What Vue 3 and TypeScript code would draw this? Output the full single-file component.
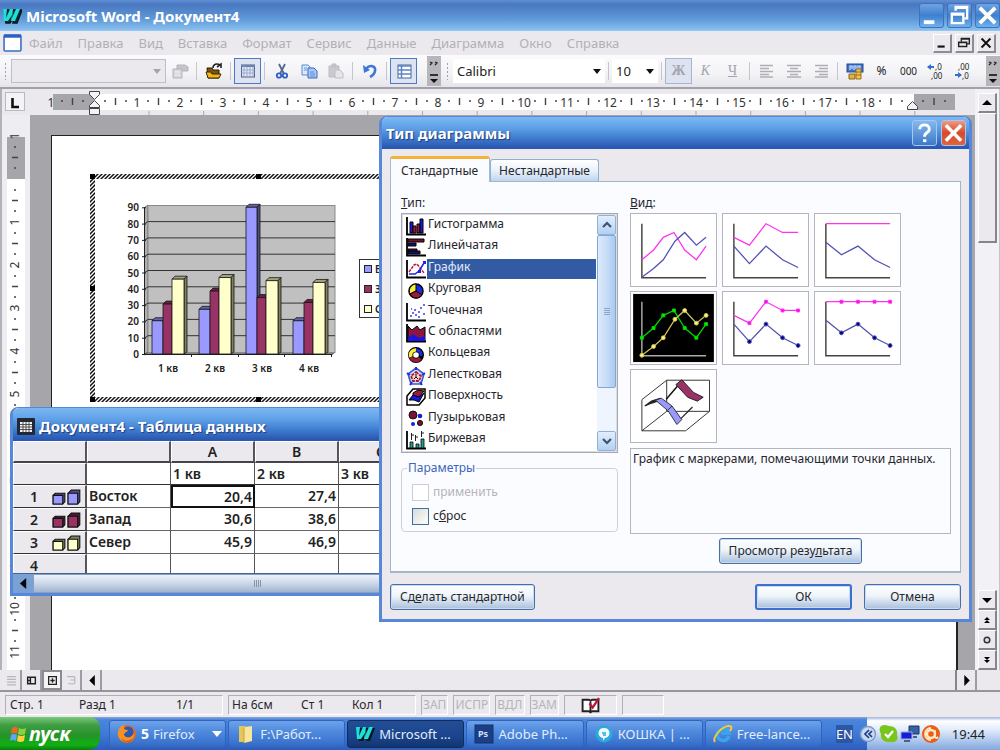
<script setup lang="ts">
import { ref } from 'vue'

const menus = ['Файл', 'Правка', 'Вид', 'Вставка', 'Формат', 'Сервис', 'Данные', 'Диаграмма', 'Окно', 'Справка']

const rulerNumbers = Array.from({ length: 18 }, (_, i) => i + 1)
const sideNumbers = Array.from({ length: 11 }, (_, i) => i + 1)
const tabStops = Array.from({ length: 15 }, (_, i) => 149 + i * 54.7)

const chartTypes = [
  { id: 'column', label: 'Гистограмма' },
  { id: 'bar', label: 'Линейчатая' },
  { id: 'line', label: 'График' },
  { id: 'pie', label: 'Круговая' },
  { id: 'scatter', label: 'Точечная' },
  { id: 'area', label: 'С областями' },
  { id: 'ring', label: 'Кольцевая' },
  { id: 'radar', label: 'Лепестковая' },
  { id: 'surface', label: 'Поверхность' },
  { id: 'bubble', label: 'Пузырьковая' },
  { id: 'stock', label: 'Биржевая' },
]
const selectedType = ref('line')
const selectedView = ref(3)
const applyFormat = ref(false)
const resetFormat = ref(false)

type Pt = [number, number]
interface View { a: Pt[]; b: Pt[]; markers: boolean }
const cross: Pt[] = [[11, 47], [23, 37], [33, 24], [44, 19], [55, 37], [67, 47], [77, 33]]
const rise: Pt[] = [[11, 65], [23, 56], [33, 47], [45, 28], [55, 19], [67, 32], [77, 24]]
const stackA: Pt[] = [[11, 24], [27, 32], [44, 10], [61, 19], [77, 19]]
const stackB: Pt[] = [[11, 33], [27, 51], [44, 33], [61, 47], [77, 55]]
const fullA: Pt[] = [[11, 10], [27, 10], [44, 10], [61, 10], [77, 10]]
const fullB: Pt[] = [[11, 29], [27, 42], [44, 33], [61, 47], [77, 55]]
const views: View[] = [
  { a: cross, b: rise, markers: false },
  { a: stackA, b: stackB, markers: false },
  { a: fullA, b: fullB, markers: false },
  { a: cross, b: rise, markers: true },
  { a: stackA, b: stackB, markers: true },
  { a: fullA, b: fullB, markers: true },
]
const toPoints = (p: Pt[]) => p.map((q) => q.join(',')).join(' ')
const markersOf = (v: View, p: Pt[]) => (v.a === cross ? p : p.slice(1))

const series = [
  { name: 'Восток', values: [20.4, 27.4, 90, 20.4], front: '#9999ff', side: '#4d4d80', top: '#6666aa' },
  { name: 'Запад', values: [30.6, 38.6, 34.6, 31.6], front: '#993366', side: '#4d1a33', top: '#66223f' },
  { name: 'Север', values: [45.9, 46.9, 45, 43.9], front: '#ffffcc', side: '#80805c', top: '#a5a57c' },
]
const quarters = ['1 кв', '2 кв', '3 кв', '4 кв']
const sheetColumns = 3
const levels = [0, 10, 20, 30, 40, 50, 60, 70, 80, 90]
const barOffsets = [152, 163, 172]
const barWidths = [11, 9, 12]
const base = 354
const scale = 1.63
interface Bar { x: number; w: number; y: number; front: string; side: string; top: string }
const bars: Bar[] = []
for (let q = 0; q < 4; q++) {
  series.forEach((s, i) => {
    bars.push({ x: barOffsets[i] + q * 47, w: barWidths[i], y: base - s.values[q] * scale, front: s.front, side: s.side, top: s.top })
  })
}
const fmt = (n: number) => n.toString().replace('.', ',')

const tasks = [
  { id: 'firefox', label: 'Firefox' },
  { id: 'folder', label: 'F:\\Работ...' },
  { id: 'word', label: 'Microsoft ...' },
  { id: 'ps', label: 'Adobe Ph...' },
  { id: 'chat', label: 'КОШКА | ...' },
  { id: 'ie', label: 'Free-lance...' },
]
</script>

<template>
  <div class="desktop">
    <header class="app-title">
      <svg class="w-logo" viewBox="0 0 20 18"><path d="M2 3h5l-1 8 4-8h4l-1 8 3-8h4l-5 13h-4l1-6-4 6H4z" fill="#0d2b33" stroke="#06181c" stroke-width="1.5" /><path d="M1 2h4l-1 9 4-9h3l-1 9 4-9h4l-5 12H9l1-6-4 6H2z" fill="#1fe0d6" /></svg>
      <h1>Microsoft Word - Документ4</h1>
      <div class="win-btns">
        <button aria-label="Свернуть"><svg viewBox="0 0 24 24"><path d="M4 19h11" stroke="#fff" stroke-width="4" /></svg></button>
        <button aria-label="Развернуть"><svg viewBox="0 0 24 24"><path d="M8 7V3h12v12h-3M8 4h12" fill="none" stroke="#fff" stroke-width="2.5" /><path d="M4 10h12v10H4zM4 11h12" fill="none" stroke="#fff" stroke-width="2.5" /></svg></button>
        <button aria-label="Закрыть"><svg viewBox="0 0 24 24"><path d="M4 4l16 16M20 4L4 20" stroke="#fff" stroke-width="4" /></svg></button>
      </div>
    </header>

    <nav class="menubar">
      <svg class="doc-icon" viewBox="0 0 18 17"><rect x="1" y="1" width="16" height="15" rx="1" fill="#fff" stroke="#3a6fc4" stroke-width="1.5" /><path d="M1 2h16" stroke="#2b62c0" stroke-width="3" /></svg>
      <button v-for="m in menus" :key="m" class="menu" disabled>{{ m }}</button>
      <div class="doc-btns">
        <button aria-label="Свернуть документ"><svg viewBox="0 0 18 18"><path d="M4 13h8" stroke="#111" stroke-width="2.4" /></svg></button>
        <button aria-label="Восстановить документ"><svg viewBox="0 0 18 18"><path d="M6 7V4h9v6h-3M6 4.5h9M3 8h9v5H3zM3 8.500h9" fill="none" stroke="#222" stroke-width="1.6" /></svg></button>
        <button aria-label="Закрыть документ"><svg viewBox="0 0 18 18"><path d="M4 4l10 10M14 4L4 14" stroke="#111" stroke-width="2.2" /></svg></button>
      </div>
    </nav>

    <div class="toolbar">
      <i class="grip" />
      <div class="combo combo-area off"><select disabled aria-label="Элементы диаграммы"><option></option></select><svg viewBox="0 0 8 5"><path d="M0 0h8l-4 5z" fill="#a5a5ad" /></svg></div>
      <button class="tool" disabled aria-label="Свойства"><svg viewBox="0 0 20 20"><path d="M7 4h8l3 2v4H7z" fill="#c4c4ca" stroke="#b4b4bc" /><path d="M3 8h9v9H3z" fill="#d6d6db" stroke="#b4b4bc" /><path d="M5 11h5M5 14h5" stroke="#f5f5f8" /></svg></button>
      <i class="sep" />
      <button class="tool" aria-label="Импорт файла"><svg viewBox="0 0 20 20"><path d="M3 7h5l1 2h6v8H4z" fill="#7a5410" stroke="#2a1c05" /><path d="M2 11h5l1 2h9l-2 4H4z" fill="#f3b51d" stroke="#3b2706" /><path d="M9 7c0-4 4-5 7-3M13 6l4-3v4" fill="none" stroke="#222" stroke-width="1.6" /></svg></button>
      <i class="sep" />
      <button class="tool on" aria-label="Режим таблицы"><svg viewBox="0 0 20 20"><rect x="3.500" y="4" width="13" height="12" fill="#dfe6f5" stroke="#4d5f88" /><path d="M3 5h14" stroke="#6682b5" stroke-width="2" /><path d="M6 4v12M9 6v10M12 6v10M15 6v10M3 9h14M3 12h14" stroke="#91a2c4" stroke-width=".8" /></svg></button>
      <i class="sep" />
      <button class="tool" aria-label="Вырезать"><svg viewBox="0 0 20 20"><path d="M7 3l5 10M13 3L8 13" stroke="#53678f" stroke-width="1.8" /><circle cx="7" cy="14.500" r="2.200" fill="none" stroke="#2c5fc7" stroke-width="1.800" /><circle cx="13" cy="14.500" r="2.200" fill="none" stroke="#2c5fc7" stroke-width="1.800" /></svg></button>
      <button class="tool" aria-label="Копировать"><svg viewBox="0 0 20 20"><path d="M3 4h6l2 2v8H3z" fill="#dbe8fc" stroke="#5c86cf" /><path d="M9 7h6l3 3v7H9z" fill="#a9c8f5" stroke="#3668bd" /><path d="M5 7h3M5 9h3M11 11h4M11 13h5M11 15h5" stroke="#4f7fca" stroke-width=".8" /></svg></button>
      <button class="tool" disabled aria-label="Вставить"><svg viewBox="0 0 20 20"><path d="M3 5h10v11H3zM6 3h4v3H6z" fill="#c9c9ce" stroke="#bcbcc3" /><path d="M9 9h5l3 3v5H9z" fill="#e6e6ea" stroke="#bcbcc3" /></svg></button>
      <i class="sep" />
      <button class="tool" aria-label="Отменить"><svg viewBox="0 0 20 20"><path d="M6 8c4-5 10-3 9 2-.5 3-3 5-5 6" fill="none" stroke="#3f76d8" stroke-width="2.6" /><path d="M3 4l1 8 6-3z" fill="#3f76d8" /></svg></button>
      <i class="sep" />
      <button class="tool on" aria-label="По строкам"><svg viewBox="0 0 20 20"><rect x="4" y="4" width="13" height="13" fill="#fff" stroke="#4066a8" /><path d="M4 5h13M4 9h13M4 13h13M7.500 4v13" stroke="#5c82c4" stroke-width="1.5" /></svg></button>
      <span class="fill" />
      <button class="more" aria-label="Параметры панели"><svg viewBox="0 0 14 28"><path d="M3 5l2 1-2 2M8 5l2 1-2 2" fill="none" stroke="#222" stroke-width="1.3" /><path d="M3 18h8" stroke="#111" stroke-width="1.600" /><path d="M3 22h8l-4 4z" fill="#111" /></svg></button>

      <i class="grip second" />
      <div class="combo combo-font"><select aria-label="Шрифт"><option>Calibri</option></select><svg viewBox="0 0 8 5"><path d="M0 0h8l-4 5z" fill="#111" /></svg></div>
      <i class="sep" />
      <div class="combo combo-size"><select aria-label="Размер шрифта"><option>10</option></select><svg viewBox="0 0 8 5"><path d="M0 0h8l-4 5z" fill="#111" /></svg></div>
      <i class="sep" />
      <button class="tool on dim bold" disabled>Ж</button>
      <button class="tool dim italic" disabled>К</button>
      <button class="tool dim under" disabled>Ч</button>
      <i class="sep" />
      <button class="tool" disabled aria-label="По левому краю"><svg viewBox="0 0 20 20"><path d="M3 4.500h13M3 7.500h9M3 10.500h13M3 13.500h9M3 16h13" stroke="#aeaeb5" stroke-width="1.300" /></svg></button>
      <button class="tool" disabled aria-label="По центру"><svg viewBox="0 0 20 20"><path d="M3 4.500h14M6 7.500h8M3 10.500h14M6 13.500h8M3 16h14" stroke="#aeaeb5" stroke-width="1.300" /></svg></button>
      <button class="tool" disabled aria-label="По правому краю"><svg viewBox="0 0 20 20"><path d="M4 4.500h13M8 7.500h9M4 10.500h13M8 13.500h9M4 16h13" stroke="#aeaeb5" stroke-width="1.300" /></svg></button>
      <i class="sep" />
      <button class="tool" aria-label="Денежный формат"><svg viewBox="0 0 20 20"><rect x="2" y="3" width="16" height="8" fill="#3e74cf" stroke="#244a92" /><path d="M5 9V5h2v3M9 9V5h2v3M13 9V5h2v3" fill="none" stroke="#cfe0fb" stroke-width="1.200" /><path d="M4 13h6v5H4z" fill="#dfb143" stroke="#8c6414" /><path d="M11 8h5v10h-5z" fill="#f2c44e" stroke="#9a6f17" /><path d="M11 11h5M11 14h5" stroke="#9a6f17" /></svg></button>
      <button class="tool small">%</button>
      <button class="tool small zeros">000</button>
      <button class="tool" aria-label="Увеличить разрядность"><svg viewBox="0 0 20 20"><path d="M2 6h6" stroke="#2f6fd6" stroke-width="2" /><path d="M1 6l4-3v6z" fill="#2f6fd6" /><text x="9" y="9">,0</text><text x="5" y="18">,00</text></svg></button>
      <button class="tool" aria-label="Уменьшить разрядность"><svg viewBox="0 0 20 20"><text x="5" y="9">,00</text><path d="M2 14h6" stroke="#2f6fd6" stroke-width="2" /><path d="M9 14l-4-3v6z" fill="#2f6fd6" /><text x="9" y="18">,0</text></svg></button>
      <span class="fill" />
      <button class="more" aria-label="Параметры форматирования"><svg viewBox="0 0 14 28"><path d="M3 5l2 1-2 2M8 5l2 1-2 2" fill="none" stroke="#222" stroke-width="1.3" /><path d="M3 18h8" stroke="#111" stroke-width="1.600" /><path d="M3 22h8l-4 4z" fill="#111" /></svg></button>
    </div>

    <div class="work">
      <div class="work-main">
        <div class="ruler-row">
          <svg width="975" height="26" viewBox="0 89 975 26">
            <rect x="5.500" y="92.500" width="19" height="18" fill="#f4f4f7" stroke="#b9b9c0" />
            <path d="M12.500 98v9H19" fill="none" stroke="#111" stroke-width="2.600" />
            <rect x="93" y="94" width="821" height="16" fill="#fff" />
            <rect x="53" y="94" width="41" height="16" fill="#a5a5aa" />
            <rect x="914" y="94" width="41" height="16" fill="#a5a5aa" />
            <g class="ticks">
              <text x="51" y="107">1</text>
              <template v-for="n in rulerNumbers" :key="n">
                <text :x="94 + n * 43" y="107">{{ n }}</text>
                <path :d="`M${94 + n * 43 - 33} 101h2M${94 + n * 43 - 12} 101h2M${94 + n * 43 - 21.5} 98v7`" />
              </template>
              <path d="M61 101h2M72.500 98v7M82 101h2M879 101h2M891 98v7M901 101h2M922 101h2M934 98v7M944 101h2" />
            </g>
            <path v-for="t in tabStops" :key="t" :d="`M${t} 111v4`" stroke="#a9a9b0" />
            <path d="M89.500 91.500h10v3l-5 5-5-5z M89.500 107.500v-2l5-5 5 5v2z M89.500 108.500h10v6h-10z" fill="#f4f4f7" stroke="#444" />
            <path d="M907.500 109.500v-3l5-5 5 5v3z" fill="#f4f4f7" stroke="#444" />
          </svg>
        </div>
        <div class="view">
          <div class="side-ruler">
            <svg width="30" height="555" viewBox="0 115 30 555">
              <rect x="7" y="137" width="18" height="42" fill="#a5a5aa" />
              <rect x="7" y="179" width="18" height="491" fill="#fff" />
              <g class="ticks">
                <text transform="translate(19 136) rotate(-90)">1</text>
                <path d="M14 147h2M12 157.500h6M14 168h2" />
                <template v-for="n in sideNumbers" :key="n">
                  <text :transform="`translate(19 ${179 + n * 43}) rotate(-90)`">{{ n }}</text>
                  <path :d="`M14 ${179 + n * 43 - 32}h2M14 ${179 + n * 43 - 11}h2M12 ${179 + n * 43 - 21.5}h6`" />
                </template>
              </g>
            </svg>
          </div>
          <div class="canvas">
            <div class="page">
              <svg class="chart" width="336" height="230" viewBox="90 173 336 230">
                <defs>
                  <pattern id="hatch" width="4" height="4" patternUnits="userSpaceOnUse"><path d="M-1 5l6-6M-1 1l2-2M3 5l2-2" stroke="#111" stroke-width="1.500" /></pattern>
                </defs>
                <path d="M90 174h336v5H90zM90 397h336v5H90zM90 174h5v228h-5zM421 174h5v228h-5z" fill="url(#hatch)" />
                <path v-for="[hx, hy] in [[92, 176], [258, 176], [423, 176], [92, 288], [423, 288], [92, 399], [258, 399], [423, 399]]" :key="`${hx}-${hy}`" :d="`M${hx - 2} ${hy - 2}h5v5h-5z`" fill="#000" />
                <path d="M144.500 207.500l3.500-2.500v148l-3.500 2z" fill="#b0b0b0" stroke="#777" />
                <path d="M144 354.500l4-2.500h187l-3 2.500z" fill="#808080" stroke="#444" />
                <rect x="148" y="205.500" width="187" height="147" fill="#c0c0c0" stroke="#8a8a8a" />
                <g v-for="l in levels" :key="l">
                  <path v-if="l > 0 && l < 90" :d="`M145 ${base - l * scale}l3-2H335`" fill="none" stroke="#333" />
                  <path :d="`M142 ${base - l * scale + 0.5}h4`" stroke="#222" />
                  <text class="axis" x="139" :y="base - l * scale + 4" text-anchor="end">{{ l }}</text>
                </g>
                <path d="M144.500 207v148M144 354.500h188M191.500 354v3M238.500 354v3M284.500 354v3M331.500 354v3" fill="none" stroke="#222" />
                <g v-for="(b, i) in bars" :key="i" stroke="#151515" stroke-width=".8">
                  <path :d="`M${b.x} ${b.y}l3-3h${b.w}l-3 3z`" :fill="b.top" />
                  <path :d="`M${b.x + b.w} ${b.y}l3-3V${base - 2}l-3 2z`" :fill="b.side" />
                  <path :d="`M${b.x} ${b.y}h${b.w}V${base}h${-b.w}z`" :fill="b.front" />
                </g>
                <text v-for="(q, i) in quarters" :key="q" class="axis" :x="168 + i * 47" y="372" text-anchor="middle">{{ q }}</text>
                <rect x="359.500" y="259.500" width="56" height="58" fill="#fff" stroke="#333" />
                <g v-for="(s, i) in series" :key="s.name">
                  <rect x="364.500" :y="265.5 + i * 20" width="7" height="7" :fill="s.front" stroke="#222" />
                  <text class="axis" x="375" :y="273 + i * 20">{{ s.name }}</text>
                </g>
              </svg>
            </div>
          </div>
        </div>
      </div>
      <div class="vscroll">
        <button class="raised" aria-label="Вверх"><svg viewBox="0 0 10 10"><path d="M0 7h10L5 2z" /></svg></button>
        <div class="raised vthumb" />
        <span class="fill" />
        <button class="raised" aria-label="Вниз"><svg viewBox="0 0 10 10"><path d="M0 3h10L5 8z" /></svg></button>
        <button class="raised" aria-label="Предыдущая страница"><svg viewBox="0 0 10 10"><path d="M2 5l3-3 3 3zM2 8l3-3 3 3z" /></svg></button>
        <button class="raised" aria-label="Выбор объекта"><svg viewBox="0 0 10 10"><circle cx="5" cy="5" r="2.800" fill="#ddd" stroke="#333" stroke-width="1.500" /></svg></button>
        <button class="raised" aria-label="Следующая страница"><svg viewBox="0 0 10 10"><path d="M2 2l3 3 3-3zM2 5l3 3 3-3z" /></svg></button>
      </div>
    </div>

    <div class="hscroll">
      <button class="mode" aria-label="Обычный режим"><svg viewBox="0 0 10 10"><path d="M1 1.500h8M1 4h8M1 6.500h8M1 9h8" stroke="#b5b5bc" /></svg></button>
      <button class="mode" aria-label="Веб-документ"><svg viewBox="0 0 10 10"><path d="M1.500 2h7v6h-7zM4 2v6M2 5h2" fill="none" stroke="#222" stroke-width="1.300" /></svg></button>
      <button class="mode pressed" aria-label="Разметка страницы"><svg viewBox="0 0 10 10"><path d="M1.500 1.500h7v7h-7zM3 5h4M5 3v4" fill="none" stroke="#222" stroke-width="1.200" /></svg></button>
      <button class="mode" aria-label="Структура"><svg viewBox="0 0 10 10"><path d="M1 1.500h7M4 4.500h4M2 8h6M8 1.500v6" stroke="#b5b5bc" /></svg></button>
      <button class="mode wide" aria-label="Влево"><svg viewBox="0 0 10 10"><path d="M8 0v10L3 5z" /></svg></button>
      <span class="fill htrack" />
      <button class="mode wide" aria-label="Вправо"><svg viewBox="0 0 10 10"><path d="M3 0v10l5-5z" /></svg></button>
      <span class="corner" />
    </div>

    <footer class="status">
      <div class="cell cell-page"><span>Стр. 1</span><span>Разд 1</span><span>1/1</span></div>
      <div class="cell cell-pos"><span>На 6см</span><span>Ст 1</span><span>Кол 1</span></div>
      <div class="cell flag">ЗАП</div>
      <div class="cell flag">ИСПР</div>
      <div class="cell flag">ВДЛ</div>
      <div class="cell flag">ЗАМ</div>
      <div class="cell book"><svg viewBox="0 0 18 16"><path d="M1.500 2.500h6l1.500 1 1.500-1h6v11h-6l-1.500 1-1.500-1h-6zM9 3.500v11" fill="#fff" stroke="#222" stroke-width="1.800" /><path d="M8 6l3 4 6-9" fill="none" stroke="#c01530" stroke-width="2.200" /></svg></div>
      <div class="cell blank" />
    </footer>

    <div class="taskbar">
      <button class="start">
        <svg viewBox="0 0 18 18"><path d="M2 3q3-2 6 0l-1 6q-3-2-6 0z" fill="#f0642c" /><path d="M9 3q3 2 7 0l-1 6q-4 2-7 0z" fill="#8fd041" /><path d="M1 10q3-2 6 0l-1 6q-3-2-6 0z" fill="#5fa7f5" /><path d="M8 10q3 2 7 0l-1 6q-4 2-7 0z" fill="#fbd13d" /></svg>
        <span>пуск</span>
      </button>
      <div class="tasks">
        <button v-for="t in tasks" :key="t.id" class="task" :class="{ current: t.id === 'word' }">
          <svg v-if="t.id === 'firefox'" viewBox="0 0 20 20"><circle cx="10" cy="10" r="9" fill="#e8681a" /><circle cx="11" cy="8" r="5.500" fill="#2b58b5" /><path d="M1 8C2 2 6 1 8 1 5 4 8 6 11 6c-1 3-4 2-4 5 2 4 8 3 10-2 1 7-5 10-9 9C3 17 0 13 1 8z" fill="#f59022" /><path d="M4 14c3 4 9 4 12 0-1 4-9 6-12 0z" fill="#c23c10" /></svg>
          <svg v-else-if="t.id === 'folder'" viewBox="0 0 20 20"><path d="M3 2h6v16H3z" fill="#e5c65c" /><path d="M8 3l8-1v15l-8 2z" fill="#f9e59a" /><path d="M8 3v16" stroke="#c9a23c" /></svg>
          <svg v-else-if="t.id === 'word'" viewBox="0 0 20 20"><path d="M2 4h5l-1 8 4-8h4l-1 8 3-8h4l-5 13h-4l1-6-4 6H4z" fill="#03161c" /><path d="M1 3h4l-1 9 4-9h3l-1 9 4-9h4l-5 12H9l1-6-4 6H2z" fill="#1fe0d6" /></svg>
          <svg v-else-if="t.id === 'ps'" viewBox="0 0 20 20"><rect x="1" y="1" width="18" height="18" fill="#1b3f86" stroke="#15326c" /><text class="ps" x="4" y="13">Ps</text></svg>
          <svg v-else-if="t.id === 'chat'" viewBox="0 0 20 20"><circle cx="10" cy="10" r="8.500" fill="#2aa9dc" /><path d="M10 4a5 5 0 0 1 1 10l-2 3v-3a5 5 0 0 1 1-10z" fill="#eef9ff" /><path d="M8 9h4M9 11h3" stroke="#2aa9dc" stroke-width="1.400" /></svg>
          <svg v-else viewBox="0 0 20 20"><path d="M16 12a6 6 0 1 1 0-3H8" fill="none" stroke="#3aa5ee" stroke-width="3.400" /><path d="M2 18C-1 14 9 1 17 2c3 1 0 5 0 5" fill="none" stroke="#f4c83b" stroke-width="2" /></svg>
          <b v-if="t.id === 'firefox'">5</b>
          <span>{{ t.label }}</span>
          <svg v-if="t.id === 'firefox'" class="drop" viewBox="0 0 10 6"><path d="M0 0h10L5 6z" fill="#fff" /></svg>
        </button>
      </div>
      <span class="lang">EN</span>
      <div class="tray">
        <svg viewBox="0 0 20 20"><circle cx="10" cy="10" r="7.500" fill="#c8d9f0" stroke="#7f9cca" stroke-width="1.500" /><path d="M11 6l-4 4 4 4M14 7l-3 3 3 3" fill="none" stroke="#1c3f86" stroke-width="1.700" /></svg>
        <svg viewBox="0 0 20 20"><path d="M2 2c4-2 7 0 8 0 6 0 9 4 8 9 2 5-2 8-6 7C4 19 1 14 2 10 0 7 0 4 2 2z" fill="#78c51c" /><path d="M6 10l3 3 5-6" fill="none" stroke="#fff" stroke-width="2.200" /></svg>
        <svg viewBox="0 0 20 20"><path d="M9 2h10v8H9z" fill="#3862a6" stroke="#1b3566" /><path d="M1 8h11v7H1z" fill="#1420d8" stroke="#9db0cf" /><path d="M4 17h6M13 13h4" stroke="#44618f" stroke-width="2" /></svg>
        <svg viewBox="0 0 20 20"><circle cx="10" cy="10" r="9" fill="#ee5d12" /><circle cx="10" cy="10" r="4" fill="none" stroke="#ffe9c9" stroke-width="2.400" /><path d="M14 6v7q1 2 3 0M10 16a6 6 0 0 1 0-12" fill="none" stroke="#ffe9c9" stroke-width="1.800" /></svg>
        <time>19:44</time>
      </div>
    </div>

    <section class="window datasheet">
      <header>
        <svg viewBox="0 0 18 17"><rect width="18" height="17" rx="1" fill="#222836" /><rect x="3" y="4" width="12" height="10" fill="#f4f4f4" /><path d="M3 6.500h12M3 9h12M3 11.500h12M6 4v10M9 4v10M12 4v10" stroke="#444" stroke-width=".9" /></svg>
        <h2>Документ4 - Таблица данных</h2>
      </header>
      <div class="sheet">
        <table>
          <thead>
            <tr><th class="rowhead"></th><th></th><th>A</th><th>B</th><th>C</th></tr>
            <tr class="names"><th class="rowhead"></th><td></td><td v-for="q in quarters.slice(0, sheetColumns)" :key="q">{{ q }}</td></tr>
          </thead>
          <tbody>
            <tr v-for="(s, i) in series" :key="s.name">
              <th class="rowhead"><div><span>{{ i + 1 }}</span>
                <svg viewBox="0 0 28 15"><path d="M1 6l2-2h9v8l-2 2H1zM15 4l3-3h8v11l-2 2h-9z" :fill="s.side" stroke="#111" /><path d="M1 6h9v8H1zM15 4h9v10h-9z" :fill="s.front" stroke="#111" /></svg></div></th>
              <td>{{ s.name }}</td>
              <td v-for="(v, j) in s.values.slice(0, sheetColumns)" :key="j" class="num" :class="{ active: i === 0 && j === 0 }">{{ fmt(v) }}</td>
            </tr>
            <tr><th class="rowhead"><div><span>4</span></div></th><td></td><td></td><td></td><td></td></tr>
          </tbody>
        </table>
      </div>
      <div class="sheet-scroll">
        <button aria-label="Прокрутить влево"><svg viewBox="0 0 10 12"><path d="M8 0v12L1 6z" fill="#05070c" /></svg></button>
        <div class="sheet-thumb"><i /></div>
      </div>
    </section>

    <section class="window dialog" role="dialog" aria-labelledby="dlg-title">
      <header>
        <h2 id="dlg-title">Тип диаграммы</h2>
        <button class="help" aria-label="Справка"><svg viewBox="0 0 24 24"><path d="M7 8c0-6 10-6 10 0 0 4-5 3-5 8" fill="none" stroke="#fff" stroke-width="3" /><path d="M10.500 18.500h3.500v3h-3.500z" fill="#fff" /></svg></button>
        <button class="close" aria-label="Закрыть"><svg viewBox="0 0 24 24"><path d="M4 4l16 16M20 4L4 20" stroke="#fff" stroke-width="3.600" /></svg></button>
      </header>
      <div class="dialog-body">
        <div class="tabs" role="tablist">
          <button class="tab current" role="tab" aria-selected="true">Стандартные</button>
          <button class="tab" role="tab" aria-selected="false">Нестандартные</button>
        </div>
        <div class="panel">
          <div class="left">
            <div id="type-label" class="label"><u>Т</u>ип:</div>
            <div class="listbox">
              <ul role="listbox" aria-labelledby="type-label">
                <li v-for="t in chartTypes" :key="t.id" role="option" :aria-selected="t.id === selectedType" @click="selectedType = t.id">
                  <svg viewBox="0 0 20 20">
                    <path v-if="['column', 'bar', 'line', 'scatter', 'area', 'stock'].includes(t.id)" d="M1 1v17.500h19" fill="none" stroke="#000" stroke-width="1.800" />
                    <template v-if="t.id === 'column'"><path d="M4 6h3v11H4z" fill="#1a1ad6" stroke="#000" /><path d="M7 10h3v7H7z" fill="#9c1a3a" stroke="#000" /><path d="M11 8h3v9h-3z" fill="#9c1a3a" stroke="#000" /><path d="M14 3h3v14h-3z" fill="#1a1ad6" stroke="#000" /></template>
                    <template v-else-if="t.id === 'bar'"><path d="M2 2h16v3H2zM2 12h9v2H2z" fill="#7a1030" stroke="#000" /><path d="M2 6h8v3H2zM2 14h12v3H2z" fill="#10107a" stroke="#000" /></template>
                    <template v-else-if="t.id === 'line'"><path d="M3 13l5-7 3-1 7 9" fill="none" stroke="#c41b3c" stroke-width="1.500" stroke-dasharray="3 1" /><path d="M3 15h6l4-3 5-8" fill="none" stroke="#2222e0" stroke-width="1.500" /><path d="M17 2h3v3h-3zM12 11h3v3h-3z" fill="#2222e0" /></template>
                    <template v-else-if="t.id === 'pie'"><circle cx="10" cy="11" r="7" fill="#1a2ae0" stroke="#000" stroke-width="1.500" /><path d="M10 11V4a7 7 0 0 0-6 10z" fill="#f7ef3a" stroke="#000" /><path d="M10 11l-6 3a7 7 0 0 0 12 1z" fill="#9c1a3a" stroke="#000" /></template>
                    <template v-else-if="t.id === 'scatter'"><path d="M4 14h2M6 11h2M9 13h2M8 8h2M12 10h2M14 6h2M12 15h2M17 3h2M17 12h2M5 7h1" stroke="#3c3ce8" stroke-width="1.500" /></template>
                    <template v-else-if="t.id === 'area'"><path d="M2 3l4 4 5-4 3 4 5-3v14H2z" fill="#8e1540" stroke="#000" /><path d="M2 15l5-4 6 4 6-2v5H2z" fill="#1616e0" /></template>
                    <template v-else-if="t.id === 'ring'"><circle cx="10" cy="11" r="5" fill="none" stroke="#000" stroke-width="6" /><path d="M5 13a5 5 0 0 1 5-7" fill="none" stroke="#f7ef3a" stroke-width="3.500" /><path d="M5 13a5 5 0 0 0 9 1" fill="none" stroke="#9c1a3a" stroke-width="3.500" /><path d="M10 6a5 5 0 0 1 5 6" fill="none" stroke="#1a2ae0" stroke-width="3" /><circle cx="10" cy="11" r="2.800" fill="#fff" /></template>
                    <template v-else-if="t.id === 'radar'"><path d="M10 2l8 6-3 10H5L2 8z" fill="#d5dcff" stroke="#3e55d8" stroke-width="1.600" /><path d="M10 1v3M1 7l3 2M19 7l-3 2M4 19l2-3M16 19l-2-3" stroke="#2233cc" stroke-width="2" /><path d="M10 6l5 4-2 5H7l-2-5z" fill="#f7d6d6" stroke="#a01c2c" stroke-width="1.800" stroke-dasharray="3 1" /><path d="M10 8v3l2 2M10 11l-2 2" fill="none" stroke="#111" /></template>
                    <template v-else-if="t.id === 'surface'"><path d="M1 9l6-7h12v9l-6 7H1z" fill="#fff" stroke="#000" stroke-width="1.500" /><path d="M7 6l5-3 6 1-5 6-6-1z" fill="#9c1a3a" stroke="#000" /><path d="M3 13l4-5 6 2 5-4-5 9-5-2z" fill="#1616e0" stroke="#000" /></template>
                    <template v-else-if="t.id === 'bubble'"><circle cx="7" cy="6" r="4" fill="#7c1136" stroke="#111" /><circle cx="14" cy="7" r="2.300" fill="#1a1ae0" /><circle cx="7" cy="15" r="2" fill="#1a1ae0" /><circle cx="14" cy="14" r="2.600" fill="#7c1136" stroke="#111" /></template>
                    <template v-else-if="t.id === 'stock'"><path d="M4 12h3v6H4zM10 14h3v4h-3zM15 9h3v9h-3z" fill="#21a08c" stroke="#000" stroke-width=".8" /><path d="M5.500 3v7M9.500 5v6M15.500 1v6M5 5h3M10 7h2M15 3h3" stroke="#222" /></template>
                  </svg>
                  <span>{{ t.label }}</span>
                </li>
              </ul>
              <div class="list-scroll">
                <button aria-label="Список вверх"><svg viewBox="0 0 10 10"><path d="M1 7l4-4 4 4" /></svg></button>
                <div class="list-thumb"><i /></div>
                <span class="fill" />
                <button aria-label="Список вниз"><svg viewBox="0 0 10 10"><path d="M1 3l4 4 4-4" /></svg></button>
              </div>
            </div>
            <fieldset>
              <legend>Параметры</legend>
              <label class="off"><input v-model="applyFormat" type="checkbox" disabled />применить</label>
              <label><input v-model="resetFormat" type="checkbox" /><span>с<u>б</u>рос</span></label>
            </fieldset>
          </div>
          <div class="right">
            <div class="label"><u>В</u>ид:</div>
            <div class="thumbs">
              <button v-for="(v, i) in views" :key="i" class="thumb" :class="{ picked: i === selectedView }" :aria-label="`Вид ${i + 1}`" @click="selectedView = i">
                <svg viewBox="0 0 87 74">
                  <rect v-if="i === selectedView" x="2" y="2" width="83" height="70" fill="#000" />
                  <path d="M11 10v55.500h66" fill="none" :stroke="i === selectedView ? '#aaa' : '#444'" stroke-width="1.500" />
                  <g :stroke="i === selectedView ? '#00d800' : '#ff33ee'" :fill="i === selectedView ? '#00f000' : '#ff00e6'">
                    <polyline :points="toPoints(v.a)" fill="none" stroke-width="1.300" />
                    <template v-if="v.markers"><path v-for="p in markersOf(v, v.a)" :key="p[0]" :d="`M${p[0] - 1.5} ${p[1] - 1.5}h3v3h-3z`" /></template>
                  </g>
                  <g :stroke="i === selectedView ? '#cfc25a' : '#5050b4'" :fill="i === selectedView ? '#fff27a' : '#00007c'">
                    <polyline :points="toPoints(v.b)" fill="none" stroke-width="1.300" />
                    <template v-if="v.markers"><circle v-for="p in markersOf(v, v.b)" :key="p[0]" :cx="p[0]" :cy="p[1]" r="2" /></template>
                  </g>
                </svg>
              </button>
              <button class="thumb" aria-label="Вид 7">
                <svg viewBox="0 0 87 74"><path d="M11 30.500V62.500H56L80.500 42.500V10.500H36.500L11 30.500M36.500 10.500v32h44M36.500 42.500L11 62.500" fill="none" stroke="#333" /><path d="M36 30l13-15" stroke="#111" stroke-width="1.500" /><path d="M46 15l6-5 12 13 10 5-6 4-10-4z" fill="#993366" stroke="#222" /><path d="M14 37l7-5 9-3-3 3-6 2zM48 53l15-15" fill="#222" stroke="#222" stroke-width="1.200" /><path d="M25 31l6-2 11 8 10 14-5 5-9-14z" fill="#9999ff" stroke="#333" /><path d="M38 41l4-4" stroke="#333" /></svg>
              </button>
            </div>
            <div class="descr">График с маркерами, помечающими точки данных.</div>
            <button class="btn preview">Просмотр резу<u>л</u>ьтата</button>
          </div>
        </div>
        <div class="actions">
          <button class="btn">Сд<u>е</u>лать стандартной</button>
          <span class="fill" />
          <button class="btn fixed primary">ОК</button>
          <button class="btn fixed">Отмена</button>
        </div>
      </div>
    </section>
  </div>
</template>

<style>
body { margin: 0; }
</style>

<style scoped>
* { box-sizing: border-box; }
.desktop { position: relative; display: flex; flex-direction: column; height: 100vh; min-height: 700px; overflow: hidden; background: #ebe9ed; color: #26262c; font-family: "Noto Sans", "Open Sans", sans-serif; font-size: 12px; line-height: 16px; }
button, select { font: inherit; color: inherit; }
button { padding: 0; border: 0; background: none; }
h1, h2, ul { margin: 0; padding: 0; }
.fill { flex: 1; }

.app-title { display: flex; align-items: center; height: 31px; padding-left: 2px; gap: 4px; color: #fff; background: linear-gradient(#5f8ed4 0, #4a78c0 15%, #5e98d8 60%, #85bdee 95%, #9accf5); }
.app-title h1 { flex: 1; font-size: 15px; line-height: 20px; font-weight: 700; }
.w-logo { width: 20px; height: 18px; }
.win-btns { display: flex; gap: 3px; }
.win-btns button { width: 25px; height: 25px; border: 1px solid #3f72bb; border-radius: 3px; background: linear-gradient(#6fa3e2, #3f7fd0 50%, #6eb1ee); }
.win-btns svg { display: block; width: 100%; height: 100%; }

.menubar { display: flex; align-items: center; height: 24px; padding: 0 4px 0 3px; background: #ebe9ee; }
.doc-icon { width: 19px; height: 18px; margin-right: 7px; }
.menu { margin-right: 15px; font-size: 13px; line-height: 20px; color: #b2b0b6; }
.doc-btns { display: flex; gap: 3px; margin-left: auto; }
.doc-btns button { width: 19px; height: 19px; border: solid; border-width: 1px 2px 2px 1px; border-color: #fff #8c8c94 #8c8c94 #fff; }
.doc-btns svg { display: block; width: 16px; height: 16px; }

.toolbar { display: flex; align-items: center; height: 34px; padding: 0 0 0 4px; background: linear-gradient(#fbfbfd, #f3f3f6 60%, #e4e4ea); border-bottom: 2px solid #a3a1a8; }
.grip { width: 3px; height: 18px; margin-right: 4px; background: radial-gradient(circle, #a0a0a8 1px, transparent 1px) 0 0 / 3px 4px; }
.grip.second { margin: 0 4px 0 5px; }
.combo { display: grid; align-items: center; height: 24px; background: #fff; }
.combo > * { grid-area: 1 / 1; }
.combo select { width: 100%; height: 100%; padding: 0 4px; border: 0; border-radius: 0; background: none; appearance: none; font-size: 13px; color: #222; }
.combo svg { justify-self: end; width: 8px; height: 5px; margin-right: 4px; pointer-events: none; }
.combo-area { width: 155px; }
.combo-area.off { background: #ebe9ed; border: 1px solid #bfbfc6; }
.combo-font { width: 152px; }
.combo-size { width: 46px; }
.sep { width: 1px; height: 18px; margin: 0 3px; background: #c6c4cc; }
.tool { width: 27px; height: 26px; display: grid; place-items: center; }
.tool svg { width: 20px; height: 20px; }
.tool svg text { font-size: 8px; fill: #222; }
.tool.on { border: 1px solid #4f79c2; background: #dde3f0; }
.dim { color: #a3a3ac; font: 14px "Liberation Serif", serif; }
.tool.on.dim { border-color: #a9b5cd; }
.bold { font-weight: 700; }
.italic { font-style: italic; }
.under { text-decoration: underline; }
.small { font-size: 12px; }
.zeros { font-size: 10px; }
.more { width: 14px; height: 30px; background: #b6b6bb; }
.more svg { display: block; width: 14px; height: 28px; }

.work { flex: 1; min-height: 0; display: flex; }
.work-main { flex: 1; min-width: 0; display: flex; flex-direction: column; overflow: hidden; }
.ruler-row { height: 26px; overflow: hidden; border-left: 2px solid #b3b2b8; }
.ruler-row svg { display: block; margin-left: -2px; }
.ticks text { font-size: 12px; fill: #333; text-anchor: middle; }
.ticks path { stroke: #444; stroke-width: 1.4; }
.view { flex: 1; min-height: 0; display: flex; }
.side-ruler { width: 30px; overflow: hidden; border-left: 2px solid #b3b2b8; background: #eeedf1; }
.side-ruler svg { display: block; margin-left: -2px; }
.canvas { flex: 1; min-width: 0; padding: 20px 17px 0 21px; background: #a5a5aa; }
.page { height: 100%; padding: 37px 0 0 38px; background: #fff; border: solid #222; border-width: 1px 2px 0 1px; }
.chart { display: block; }
.axis { font-size: 10px; font-weight: 600; fill: #222; }

.vscroll { width: 25px; padding: 4px 2px 0 3px; display: flex; flex-direction: column; background: #f2f2f6; border-right: 1px solid #c5c4ca; }
.raised { height: 20px; display: grid; place-items: center; background: #ebe9ed; border: solid; border-width: 1px 2px 2px 1px; border-color: #fff #85858c #85858c #fff; }
.raised svg { width: 10px; height: 10px; }
.vthumb { height: 130px; }

.hscroll { display: flex; height: 22px; background: #ebe9ed; border-bottom: 2px solid #96959c; padding-left: 2px; }
.mode { width: 20px; display: grid; place-items: center; border-right: 2px solid #9c9ca4; }
.mode svg { width: 11px; height: 11px; }
.mode.pressed { border: 2px solid #8b8b92; background: #f4f4f7; }
.htrack { border-right: 2px solid #85858c; }
.corner { width: 23px; }

.status { display: flex; align-items: center; gap: 5px; height: 25px; padding: 3px 5px 2px; background: #ebe9ed; }
.cell { display: flex; align-items: center; height: 20px; border: 1px solid; border-color: #b0afb6 #fff #fff #b0afb6; font-size: 12px; }
.cell-page { width: 218px; padding-left: 4px; }
.cell-pos { width: 188px; padding-left: 3px; }
.cell span { flex: none; width: 69px; }
.cell-page span:nth-child(2) { width: 97px; }
.cell-pos span:nth-child(2) { width: 51px; }
.cell span:last-child { width: auto; }
.flag { padding: 0 1px; color: #b5b4bb; }
.book { width: 53px; justify-content: center; }
.book svg { width: 19px; height: 17px; }
.blank { width: 42px; }

.taskbar { display: flex; align-items: stretch; height: 33px; background: linear-gradient(#8ba6d6 0, #4a86dc 8%, #3f7ad6 50%, #2c5dbe); color: #fff; }
.start { width: 100px; display: flex; align-items: center; gap: 1px; padding: 0 0 0 10px; border-radius: 0 10px 12px 0; background: linear-gradient(#7cc87c 0, #3f9d42 25%, #26932a 55%, #10b012 85%, #0b7d10); }
.start svg { width: 18px; height: 18px; }
.start span { font-size: 20px; line-height: 24px; font-weight: 700; font-style: italic; }
.tasks { flex: 1; min-width: 0; display: flex; gap: 2px; padding: 3px 14px 2px 9px; }
.task { flex: 1; min-width: 0; display: flex; align-items: center; gap: 4px; padding: 0 3px 0 7px; border: 1px solid #2f63bd; border-radius: 3px; background: linear-gradient(#6ea3ea, #4f8ade 40%, #3c76d0 80%, #3467bf); font-size: 13px; color: #e2ecfb; white-space: nowrap; }
.task.current { background: linear-gradient(#234d94, #1a448d 60%, #133570); border-color: #102d61; }
.task svg { flex: none; width: 20px; height: 20px; }
.task b { font-size: 14px; color: #fff; }
.task .drop { width: 10px; height: 6px; margin-left: auto; }
.ps { font-size: 9px; font-weight: 700; fill: #cfe3ff; }
.lang { align-self: center; margin-right: 14px; background: #2d56a5; font-size: 13px; line-height: 18px; }
.tray { width: 133px; display: flex; align-items: center; gap: 1px; padding: 0 15px 0 1px; background: linear-gradient(#9db4dc 0, #fff 12%, #dfeafa 40%, #a8c4ec 75%, #84a7dc); color: #222; }
.tray svg { flex: none; width: 20px; height: 20px; }
.tray svg:first-child { margin-left: -10px; }
.tray time { margin-left: auto; font-size: 13px; }

.window { position: absolute; border: 3px solid #5787d8; border-top-width: 1px; border-radius: 8px 8px 0 0; background: #ebe9ed; display: flex; flex-direction: column; }
.window > header { display: flex; align-items: center; border-radius: 6px 6px 0 0; color: #fff; background: linear-gradient(#7cb8f2 0, #5e9fe6 35%, #4483d4 60%, #2a58b2 95%); text-shadow: 1px 1px 1px #1d3d80; }
.window h2 { font-size: 15px; line-height: 20px; font-weight: 700; }

.datasheet { left: 10px; top: 407px; width: 476px; }
.datasheet > header { height: 33px; padding: 3px 0 0 4px; gap: 4px; }
.datasheet > header svg { width: 18px; height: 17px; }
.sheet { height: 132px; overflow: hidden; background: #fff; }
.sheet table { width: 410px; table-layout: fixed; border-collapse: separate; border-spacing: 0; font-size: 14px; line-height: 18px; font-weight: 600; color: #222; }
.sheet th, .sheet td { height: 23px; padding: 0 2px; border-right: 1px solid #55555c; border-bottom: 1px solid #66666c; text-align: left; }
.sheet thead th, .sheet thead td { height: 22px; border-bottom-color: #333; }
.sheet th { background: #ebe9ed; border-right: 2px solid #55555c; border-left: 1px solid #fff; border-top: 1px solid #fff; text-align: center; font-weight: 600; line-height: 16px; }
.sheet thead tr:first-child th { border-bottom: 2px solid #44444a; }
.sheet .rowhead { width: 74px; padding: 0 3px 0 16px; border-bottom-color: #333; }
.rowhead div { display: flex; align-items: center; justify-content: space-between; }
.rowhead svg { width: 30px; height: 16px; }
.sheet .num { text-align: right; }
.sheet .active { border: 2px solid #111; padding-right: 1px; }
.sheet-scroll { display: flex; height: 20px; border-top: 1px solid #44629a; background: #7ba0d3; }
.sheet-scroll button { width: 20px; display: grid; place-items: center; }
.sheet-scroll svg { width: 9px; height: 13px; }
.sheet-thumb { flex: 1; display: flex; align-items: center; justify-content: center; background: linear-gradient(#eef3fa, #cfdae9 45%, #a1b5cf); border: 1px solid #8aa0c0; }
.sheet-thumb i { width: 8px; height: 7px; background: repeating-linear-gradient(90deg, #8496ae 0 1px, transparent 1px 2px); }

.dialog { left: 379px; top: 116px; width: 593px; }
.dialog > header { height: 32px; padding: 0 3px 0 4px; gap: 4px; }
.dialog > header h2 { flex: 1; }
.dialog > header button { width: 25px; height: 26px; border: 1px solid #a5c7f0; border-radius: 3px; }
.dialog > header button svg { display: block; width: 100%; height: 100%; }
.help { background: linear-gradient(#84b8ef, #3d79c8); }
.close { background: linear-gradient(#f09a80, #d8492b 50%, #e0633e); }
.dialog-body { display: flex; flex-direction: column; padding: 8px 8px 9px; }
.tabs { display: flex; align-items: flex-end; height: 24px; }
.tab { height: 22px; padding: 0 8px; border: 1px solid #8fb0cf; border-bottom: 0; border-radius: 3px 3px 0 0; background: linear-gradient(#fff, #eaf1fa 50%, #bfd5ee); }
.tab.current { position: relative; height: 26px; margin-bottom: -1px; padding: 0 11px 0 10px; border-top: 3px solid #f5b13a; border-color: #f5b13a #a8bccf #a8bccf; background: #fbfcff; }
.panel { display: flex; gap: 12px; height: 392px; padding: 13px 9px 6px 10px; border: 1px solid #a3b5c9; border-bottom-width: 2px; background: #fbfcff; }
.label { height: 18px; }
.left { width: 217px; display: flex; flex-direction: column; }
.listbox { display: flex; height: 240px; padding: 1px; border: 1px solid #a8a8b0; background: #fff; outline: 1px solid #dcdce2; outline-offset: -2px; }
.listbox ul { flex: 1; display: grid; grid-template-rows: repeat(11, 1fr); list-style: none; }
.listbox li { display: flex; align-items: center; gap: 1px; padding-left: 3px; }
.listbox li svg { flex: none; width: 20px; height: 20px; }
.listbox li span { flex: 1; height: 20px; padding-left: 1px; line-height: 16px; }
.listbox li[aria-selected="true"] span { background: #325ba4; color: #e4ecfa; }
.list-scroll { width: 19px; margin-left: 1px; display: flex; flex-direction: column; background: #eef5fe; }
.list-scroll button { height: 20px; display: grid; place-items: center; border: 1px solid #92b1d9; border-radius: 2px; background: linear-gradient(#e2effd, #b3d0f2); }
.list-scroll svg { width: 10px; height: 10px; fill: none; stroke: #3c5375; stroke-width: 2.2; }
.list-thumb { height: 153px; display: grid; place-items: center; border: 1px solid #83a7d3; border-radius: 2px; background: linear-gradient(90deg, #dcebfc, #c8ddf7 50%, #a9caf0); }
.list-thumb i { width: 6px; height: 8px; background: repeating-linear-gradient(#8aa6ca 0 1px, transparent 1px 2px); }
fieldset { margin: 7px 0 0; padding: 0 0 0 10px; height: 72px; border: 1px solid #cfd0d6; border-radius: 4px; display: flex; flex-direction: column; gap: 8px; }
legend { margin-left: -5px; padding: 0 1px; color: #3c66bb; }
fieldset label { display: flex; align-items: center; gap: 4px; height: 16px; }
fieldset legend + label { margin-top: 8px; }
fieldset label.off { color: #b4b4ba; }
fieldset input { width: 17px; height: 17px; margin: 0; appearance: none; border: 1px solid #3c70a8; background: linear-gradient(135deg, #d9d9d4, #fff); }
fieldset input:disabled { border-color: #ccccd2; background: #fff; }
.right { flex: 1; min-width: 0; display: flex; flex-direction: column; }
.thumbs { display: grid; grid-template-columns: repeat(3, 87px); grid-auto-rows: 74px; gap: 4px 5px; }
.thumb { border: 1px solid #b5b5bd; background: #fff; }
.thumb svg { display: block; width: 100%; height: 100%; }
.descr { height: 86px; margin-top: 5px; padding: 2px; border: 1px solid #b5b5bd; }
.btn { height: 26px; padding: 0 9px; border: 1px solid #466fa9; border-radius: 3px; background: linear-gradient(#fdfeff, #eef5fa 45%, #a9bfdc); box-shadow: inset 0 0 0 1px #c9dcef; }
.preview { align-self: center; margin-top: 4px; }
.actions { display: flex; gap: 12px; margin-top: 11px; }
.fixed { width: 97px; }
.primary { border: 2px solid #3b6fd0; }
</style>
